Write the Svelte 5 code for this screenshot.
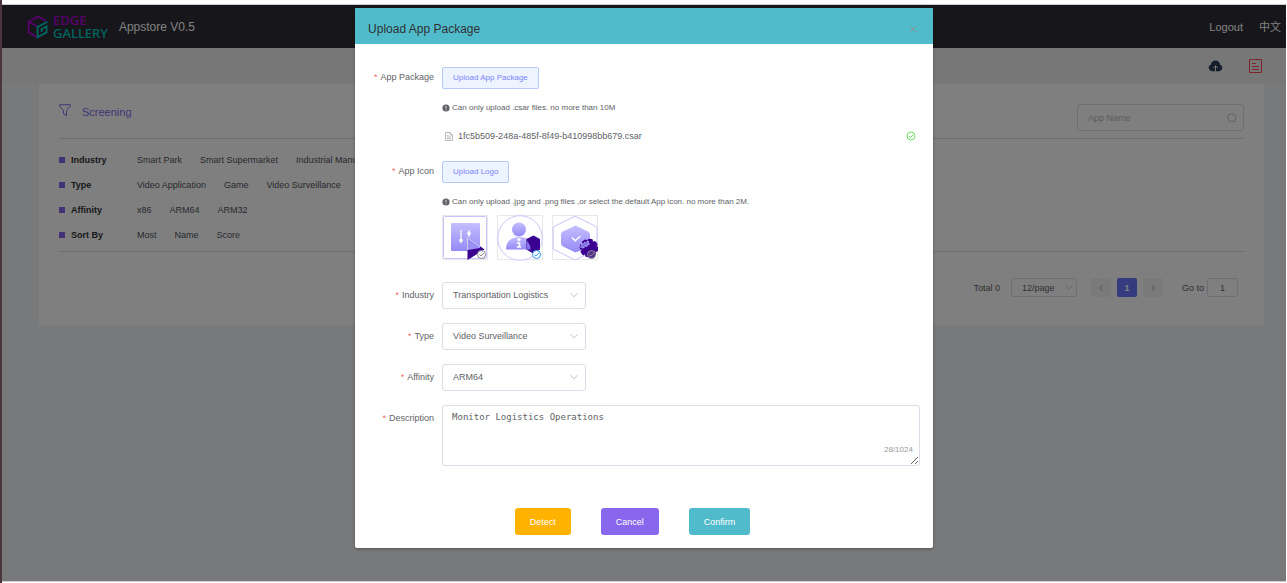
<script>
  const filters = [
    { name: 'Industry', options: ['Smart Park', 'Smart Supermarket', 'Industrial Manufacturing'] },
    { name: 'Type', options: ['Video Application', 'Game', 'Video Surveillance'] },
    { name: 'Affinity', options: ['x86', 'ARM64', 'ARM32'] },
    { name: 'Sort By', options: ['Most', 'Name', 'Score'] }
  ];
  const selects = [
    { id: 'industry', label: 'Industry', value: 'Transportation Logistics' },
    { id: 'type', label: 'Type', value: 'Video Surveillance' },
    { id: 'affinity', label: 'Affinity', value: 'ARM64' }
  ];
  let description = $state('Monitor Logistics Operations');
  let icon = $state(1);
</script>

{#snippet chevron()}
  <svg class="chevron" viewBox="0 0 10 10" width="10" height="10" aria-hidden="true"><path d="M1.5 3.2 5 6.8l3.5-3.6" /></svg>
{/snippet}

{#snippet hint(text)}
  <p class="hint">
    <svg viewBox="0 0 8 8" width="8" height="8" aria-hidden="true"><circle cx="4" cy="4" r="3.6" fill="#606266" /><path d="M4 1.8v2.6M4 5.4v.9" stroke="#fff" stroke-width=".8" /></svg>
    {text}
  </p>
{/snippet}

{#snippet tick(color)}
  <svg class="tick" viewBox="0 0 10 10" width="10" height="10" aria-hidden="true"><circle cx="5" cy="5" r="4" fill="none" stroke={color} /><path d="m3 5 1.5 1.6L7.2 3.6" fill="none" stroke={color} /></svg>
{/snippet}

<div class="frame">
  <div class="page">
    <header class="top">
      <a class="logo" href="#home">
        <svg viewBox="0 0 22 24" width="22" height="24" aria-hidden="true">
          <path d="M19 6 11 1.6 1.6 6.8v10.6L10 22.2" fill="none" stroke="#b000d8" stroke-width="1.8" />
          <path d="M2 7l8 4.2" fill="none" stroke="#b000d8" stroke-width="1.6" />
          <path d="M20.4 7 10.6 11.8v10.4l9-4.8v-6l-5 2.6v3" fill="none" stroke="#00c8c0" stroke-width="1.9" />
        </svg>
        <span class="brand"><span class="edge">EDGE</span><span class="gallery">GALLERY</span></span>
      </a>
      <span class="title">Appstore V0.5</span>
      <nav><a href="#logout">Logout</a><a href="#lang">中文</a></nav>
    </header>

    <div class="tools">
      <button aria-label="Upload">
        <svg viewBox="0 0 15 12" width="15" height="12"><path d="M3.8 11.2a3.3 3.3 0 0 1-.9-6.4C3 2.3 5 .5 7.5.5s4.5 1.8 4.6 4.3a3.3 3.3 0 0 1-.9 6.4z" fill="#2c3c58" /><path d="M7.5 11.4V6M5.4 7.9l2.1-2.1 2.1 2.1" fill="none" stroke="#eee" stroke-width="1" /></svg>
      </button>
      <button aria-label="Task list">
        <svg viewBox="0 0 13 14" width="13" height="14" fill="none" stroke="#ff4a50"><path d="M.5.5h12v13H.5zM3 4.5h4M3 7.5h7M3 10.5h7" /></svg>
      </button>
    </div>

    <main class="card">
      <div class="card-head">
        <h2>
          <svg viewBox="0 0 12 12" width="12" height="12" aria-hidden="true"><path d="M.7.7h10.6v1.5L7.5 6.5v5L4.5 9.8V6.5L.7 2.2z" fill="none" stroke="#8467ec" /></svg>
          <span>Screening</span>
        </h2>
        <label class="search">
          <input type="text" placeholder="App Name" aria-label="App Name" />
          <svg viewBox="0 0 10 10" width="10" height="10" aria-hidden="true"><circle cx="4.8" cy="4.8" r="4" fill="none" stroke="#c0c4cc" /><path d="m7.7 7.7 1.6 1.6" stroke="#c0c4cc" /></svg>
        </label>
      </div>

      <div class="filters">
        {#each filters as row}
          <div class="filter">
            <strong>{row.name}</strong>
            {#each row.options as option}<a href="#filter">{option}</a>{/each}
          </div>
        {/each}
      </div>

      <div class="pager">
        <span class="total">Total 0</span>
        <span class="size"><select aria-label="Page size"><option>12/page</option></select>{@render chevron()}</span>
        <span class="pages">
          <button aria-label="Previous page"><svg viewBox="0 0 8 8" width="8" height="8"><path d="M5.5 1 2.5 4l3 3" /></svg></button>
          <button class="current">1</button>
          <button aria-label="Next page"><svg viewBox="0 0 8 8" width="8" height="8"><path d="m2.5 1 3 3-3 3" /></svg></button>
        </span>
        <label class="goto">Go to <input type="text" value="1" /></label>
      </div>
    </main>

    <div class="mask">
      <form class="dialog" role="dialog" aria-labelledby="dialog-title">
        <div class="dialog-head">
          <h1 id="dialog-title">Upload App Package</h1>
          <button type="button" aria-label="Close"><svg viewBox="0 0 8 8" width="8" height="8"><path d="m1 1 6 6M7 1 1 7" stroke="#909399" fill="none" /></svg></button>
        </div>

        <div class="dialog-body">
          <div class="row">
            <label for="package">App Package</label>
            <div class="field">
              <button type="button" id="package" class="upload">Upload App Package</button>
              {@render hint('Can only upload .csar files. no more than 10M')}
              <div class="file">
                <svg viewBox="0 0 8 9" width="8" height="9" aria-hidden="true" fill="none" stroke="#a4a8b0" stroke-width=".8"><path d="M.5.5h4.7L7.5 2.8v5.7h-7zM5 .5v2.5h2.5M2 3.5h1.5M2 5h4M2 6.7h4" /></svg>
                <span>1fc5b509-248a-485f-8f49-b410998bb679.csar</span>
                {@render tick('#6be05c')}
              </div>
            </div>
          </div>

          <div class="row icon-row">
            <label for="logo">App Icon</label>
            <div class="field">
              <button type="button" id="logo" class="upload">Upload Logo</button>
              {@render hint('Can only upload .jpg and .png files ,or select the default App icon. no more than 2M.')}
              <div class="icons">
                {#each [0, 1, 2] as i}
                  <button type="button" class="app-icon" aria-label="Default icon {i + 1}" aria-pressed={icon === i} onclick={() => (icon = i)}>
                    <svg viewBox="0 0 46 46" width="46" height="46">
                      <defs><linearGradient id="fade{i}" x2="0" y2="1"><stop stop-color="#c5beff" /><stop offset="1" stop-color="#948af5" /></linearGradient></defs>
                      <rect x=".5" y=".5" width="45" height="44" fill="#fff" stroke="#e8e8e8" />
                      {#if i === 0}
                        <rect x="1.5" y="1.5" width="43" height="42" rx="1" fill="none" stroke="#c9c4fb" />
                        <rect x="9" y="8" width="29" height="28" rx="1" fill="url(#fade0)" />
                        <path d="M19 15v13M27 15v7" stroke="#fff" stroke-width="1.2" />
                        <circle cx="19" cy="25.5" r="1.8" fill="#fff" /><circle cx="27" cy="18.5" r="1.8" fill="#fff" />
                        <path d="m25.500 22 17 12.5-17 10.5z" fill="#3a0092" />
                        <path d="M25.500 22 38 31.2v1.8L26 35z" fill="#9a8ff6" />
                        <path d="M25.500 35V22.5L38 31.5" fill="none" stroke="#fff" stroke-width=".7" />
                      {:else if i === 1}
                        <circle cx="23" cy="23" r="22.3" fill="#fff" stroke="#c9c4fb" />
                        <circle cx="22" cy="14.5" r="7" fill="url(#fade1)" />
                        <path d="M9 34.500c0-8 5-12.500 13.500-12.500S36 26.500 36 34.500z" fill="url(#fade1)" />
                        <path d="m29.500 24 7-3.500 6.500 3.500v10.500L36 38.500l-6.500-4z" fill="#3a0092" />
                        <path d="M30 26c2.500 2.500 3.500 5 3.500 8.500H30z" fill="#8274ea" />
                        <circle cx="22" cy="24.5" r="1.6" fill="#fff" /><path d="M20 28h2.500v4M19.800 32h4.400" fill="none" stroke="#fff" stroke-width="1.6" />
                      {:else}
                        <path d="M23 1.200 45 12v22L23 45 1.200 34V12z" fill="none" stroke="#c9c4fb" />
                        <path d="M23.500 10.500 36 16.500q2 1 2 3v11q0 1-2 2l-12.500 5L11 31.500q-2-1-2-3v-9q0-2 2-3z" fill="url(#fade2)" />
                        <circle cx="37" cy="33" r="7.600" fill="#3a0092" stroke="#3a0092" stroke-width="3.500" stroke-linecap="round" stroke-dasharray="2 3.970" />
                        <path d="M29 30q3-3.500 8-3.500V30L30 33.500q-2-1.500-1-3.500z" fill="#8274ea" stroke="#fff" stroke-width=".6" stroke-dasharray="2 1.500" />
                        <path d="m20 22.500 3.200 3.200 5-4.500" fill="none" stroke="#fff" stroke-width="1.5" />
                      {/if}
                      <circle cx="39.5" cy="39.5" r="4" fill={i === 2 ? '#55308c' : '#fff'} stroke={icon === i ? '#2b9bf4' : '#8a8a96'} />
                      <path d="m37.500 39.500 1.500 1.500 2.800-3" fill="none" stroke={icon === i ? '#2b9bf4' : '#8a8a96'} />
                    </svg>
                  </button>
                {/each}
              </div>
            </div>
          </div>

          {#each selects as s}
            <div class="row">
              <label for={s.id}>{s.label}</label>
              <div class="field pick"><select id={s.id}><option>{s.value}</option></select>{@render chevron()}</div>
            </div>
          {/each}

          <div class="row">
            <label for="description">Description</label>
            <div class="field area">
              <textarea id="description" maxlength="1024" spellcheck="false" bind:value={description}></textarea>
              <span class="count">{description.length}/1024</span>
            </div>
          </div>
        </div>

        <div class="actions">
          <button type="button" class="detect">Detect</button>
          <button type="button" class="cancel">Cancel</button>
          <button type="submit" class="confirm">Confirm</button>
        </div>
      </form>
    </div>
  </div>
</div>

<style>
  :global(body) { margin: 0; background: #fff; }
  * { box-sizing: border-box; }
  h1, h2, p { margin: 0; font-weight: 400; }
  a { color: inherit; text-decoration: none; }
  button, input, select { font: inherit; color: inherit; margin: 0; }
  button { padding: 0; border: 0; background: none; cursor: pointer; }
  svg { display: block; flex: none; }
  input, select, textarea {
    border: 1px solid #dcdce8;
    border-radius: 3px;
    background: #fff;
    outline: none;
  }
  select { appearance: none; width: 100%; height: 100%; padding: 0 10px; }
  .chevron { fill: none; stroke: #c0c4cc; pointer-events: none; }

  .frame {
    display: flex;
    min-height: 100vh;
    padding: 4px 1px 1px 0;
    border-left: 2px solid #4c343c;
    font: 9px/14px "Liberation Sans", Arial, "Noto Sans CJK SC", sans-serif;
    color: #606266;
  }
  .page {
    position: relative;
    flex: 1;
    min-width: 0;
    border-top: 1px solid #ccccd2;
    border-bottom: 1px solid #ccccd2;
    background: #f0f2f5;
  }

  .top {
    display: flex;
    align-items: center;
    height: 43px;
    padding: 0 5px 0 25px;
    background: #2e2c34;
    color: #fff;
  }
  .logo { display: flex; align-items: center; gap: 4px; }
  .brand { display: grid; font: 500 13px/13px "Noto Sans", sans-serif; }
  .edge { color: #b000d8; }
  .gallery { color: #00c8c0; }
  .title { margin-left: 11px; font-size: 12px; }
  nav { display: flex; gap: 16px; margin-left: auto; font-size: 11px; }

  .tools {
    display: flex;
    align-items: center;
    justify-content: flex-end;
    gap: 26px;
    height: 36px;
    padding-right: 24px;
    background: #eee;
  }

  .card { margin: 0 22px 0 37px; padding: 20px 20px 28px; background: #fff; }
  .card-head {
    display: flex;
    justify-content: space-between;
    padding-bottom: 7px;
    border-bottom: 1px solid #dcdce0;
  }
  h2 { display: flex; gap: 11px; font-size: 11px; line-height: 17px; color: #8467ec; }
  .search { position: relative; width: 167px; height: 27px; }
  .search input { width: 100%; height: 100%; padding: 0 10px; }
  .search input::placeholder { color: #b4b8c0; }
  .search svg { position: absolute; right: 7px; top: 9px; }

  .filters { padding: 8px 0 4px; border-bottom: 1px solid #dcdce0; color: #50535c; }
  .filter { display: flex; align-items: center; gap: 18px; height: 25px; white-space: nowrap; }
  .filter::before { content: ""; width: 6px; height: 6px; margin-right: -12px; background: #8467ec; }
  .filter strong { width: 48px; color: #303133; }

  .pager { display: flex; align-items: center; justify-content: flex-end; height: 19px; margin-top: 26px; padding-right: 6px; }
  .size { position: relative; width: 66px; height: 19px; margin-left: 11px; }
  .size .chevron { position: absolute; right: 3px; top: 4px; }
  .pages { display: flex; gap: 6px; margin: 0 19px 0 14px; }
  .pages button { display: grid; place-items: center; width: 20px; height: 19px; border-radius: 2px; background: #f4f4f5; font-weight: 700; }
  .pages svg { fill: none; stroke: #a8abb2; }
  .pages .current { background: #6878ff; color: #fff; }
  .goto { display: flex; align-items: center; gap: 3px; }
  .goto input { width: 31px; height: 19px; padding: 0; text-align: center; }

  .mask { position: absolute; inset: 0; padding-top: 3px; background: rgba(0, 0, 0, .5); }
  .dialog {
    width: 45%;
    margin: 0 auto;
    border-radius: 2px;
    background: #fff;
    box-shadow: 0 1px 3px rgba(0, 0, 0, .3);
  }
  .dialog-head {
    display: flex;
    align-items: center;
    justify-content: space-between;
    height: 36px;
    padding: 6px 16px 0 13px;
    background: #50bccb;
  }
  h1 { font-size: 12px; color: #303133; }
  .dialog-body { padding: 20px 13px 0; }
  .row { display: flex; margin-bottom: 14px; }
  .row > label { width: 74px; padding-right: 8px; line-height: 27px; text-align: right; }
  .row > label::before { content: "*"; margin-right: 3px; color: #f56c6c; }
  .field { position: relative; flex: 1; min-width: 0; }
  .upload {
    display: block;
    height: 22px;
    margin-top: 3px;
    padding: 0 10px;
    border: 1px solid #b6c9fb;
    border-radius: 2px;
    background: #edf3ff;
    color: #7b84fb;
    font-size: 8px;
  }
  .hint { display: flex; align-items: center; gap: 2px; margin-top: 12px; font-size: 8px; }
  .file { display: flex; align-items: center; gap: 5px; height: 16px; margin-top: 13px; padding: 0 4px 0 3px; }
  .file .tick { margin-left: auto; }
  .icon-row { margin-bottom: 22px; }
  .icons { display: flex; gap: 9px; height: 45px; margin-top: 6px; }
  .pick { flex: 0 0 144px; height: 27px; }
  .pick select { padding-bottom: 2px; }
  .pick .chevron { position: absolute; right: 7px; top: 8px; }
  textarea {
    display: block;
    width: 100%;
    height: 61px;
    padding: 4px 9px;
    color: #606266;
    font: 9px/14px "DejaVu Sans Mono", monospace;
  }
  .count { position: absolute; right: 7px; bottom: 9px; color: #999; font-size: 8px; }

  .actions { display: flex; justify-content: center; gap: 30px; padding: 28px 23px 13px 0; }
  .actions button { height: 27px; padding: 0 15px; border-radius: 3px; color: #fff; }
  .actions .detect { background: #ffb300; }
  .actions .cancel { background: #8867ec; }
  .actions .confirm { background: #50bccb; }
</style>
